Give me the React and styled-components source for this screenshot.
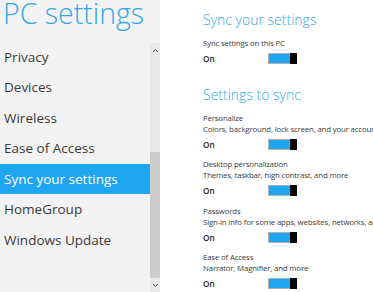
import styled, { createGlobalStyle } from "styled-components";

const GlobalStyle = createGlobalStyle`
  html, body {
    margin: 0;
    padding: 0;
    background: #fff;
    overflow: hidden;
  }
  body {
    font-family: "Open Sans", "Noto Sans", sans-serif;
  }
`;

const Screen = styled.div`
  display: flex;
  width: 373px;
  height: 292px;
  overflow: hidden;
`;

const Sidebar = styled.div`
  display: flex;
  width: 160px;
  flex-shrink: 0;
  background: #f3f3f3;
`;

const NavColumn = styled.div`
  width: 150px;
  display: flex;
  flex-direction: column;
`;

const Title = styled.div`
  height: 41.5px;
  padding-left: 3px;
  font-size: 28.5px;
  font-weight: 300;
  line-height: 26px;
  color: #35a8e6;
  white-space: nowrap;
`;

const NavItem = styled.div`
  height: 30.5px;
  line-height: 30.5px;
  padding-left: 4px;
  font-size: 13.5px;
  color: ${(p) => (p.$active ? "#fff" : "#3a3a3a")};
  background: ${(p) => (p.$active ? "#1ea6f1" : "transparent")};
  white-space: nowrap;
`;

const ScrollTrack = styled.div`
  width: 10px;
  margin-top: 43px;
  display: flex;
  flex-direction: column;
  background: #e9e9e9;
`;

const ScrollArrow = styled.div`
  height: 14px;
  display: flex;
  align-items: center;
  justify-content: center;
`;

const ScrollSpace = styled.div`
  flex: ${(p) => p.$grow};
  background: ${(p) => (p.$thumb ? "#cdcdcd" : "transparent")};
`;

const Content = styled.div`
  flex: 1;
  padding-left: 43px;
  overflow: hidden;
`;

const Heading = styled.div`
  height: 24px;
  line-height: 24px;
  margin-top: ${(p) => p.$top}px;
  font-size: 14px;
  font-weight: 300;
  color: #35a8e6;
  white-space: nowrap;
`;

const Setting = styled.div`
  margin-top: ${(p) => p.$top}px;
`;

const Label = styled.div`
  height: 11px;
  line-height: 11px;
  font-size: 7.8px;
  letter-spacing: -0.15px;
  color: #3c3c3c;
  white-space: nowrap;
`;

const Row = styled.div`
  display: flex;
  align-items: center;
  height: 11px;
  margin-top: 4px;
`;

const State = styled.div`
  width: 65px;
  font-size: 8.2px;
  font-weight: 600;
  color: #222;
`;

const Toggle = styled.div`
  display: flex;
  width: 29px;
  height: 11px;
`;

const Fill = styled.div`
  flex: 1;
  background: #1ea6f1;
  border: 1px solid #b0b0b0;
  border-right: none;
`;

const Knob = styled.div`
  width: 7px;
  background: #000;
`;

const Chevron = ({ up }) => (
  <svg width="7" height="5" viewBox="0 0 7 5">
    <path
      d={up ? "M1 4 L3.5 1.5 L6 4" : "M1 1 L3.5 3.5 L6 1"}
      fill="none"
      stroke="#555"
      strokeWidth="1"
    />
  </svg>
);

const navItems = [
  "Privacy",
  "Devices",
  "Wireless",
  "Ease of Access",
  "Sync your settings",
  "HomeGroup",
  "Windows Update",
];

const syncItems = [
  { label: "Personalize", desc: "Colors, background, lock screen, and your account picture" },
  { label: "Desktop personalization", desc: "Themes, taskbar, high contrast, and more" },
  { label: "Passwords", desc: "Sign-in info for some apps, websites, networks, and HomeGroup" },
  { label: "Ease of Access", desc: "Narrator, Magnifier, and more" },
];

const OnSwitch = () => (
  <Row>
    <State>On</State>
    <Toggle>
      <Fill />
      <Knob />
    </Toggle>
  </Row>
);

const App = () => {
  return (
    <>
      <GlobalStyle />
      <Screen>
        <Sidebar>
          <NavColumn>
            <Title>PC settings</Title>
            {navItems.map((item) => (
              <NavItem key={item} $active={item === "Sync your settings"}>
                {item}
              </NavItem>
            ))}
          </NavColumn>
          <ScrollTrack>
            <ScrollArrow>
              <Chevron up />
            </ScrollArrow>
            <ScrollSpace $grow={96} />
            <ScrollSpace $grow={127} $thumb />
            <ScrollArrow>
              <Chevron />
            </ScrollArrow>
          </ScrollTrack>
        </Sidebar>

        <Content>
          <Heading $top={8}>Sync your settings</Heading>
          <Setting $top={5.5}>
            <Label>Sync settings on this PC</Label>
            <OnSwitch />
          </Setting>

          <Heading $top={19.5}>Settings to sync</Heading>
          {syncItems.map((s, i) => (
            <Setting key={s.label} $top={i === 0 ? 5.5 : 9.5}>
              <Label>{s.label}</Label>
              <Label>{s.desc}</Label>
              <OnSwitch />
            </Setting>
          ))}
        </Content>
      </Screen>
    </>
  );
};

export default App;
